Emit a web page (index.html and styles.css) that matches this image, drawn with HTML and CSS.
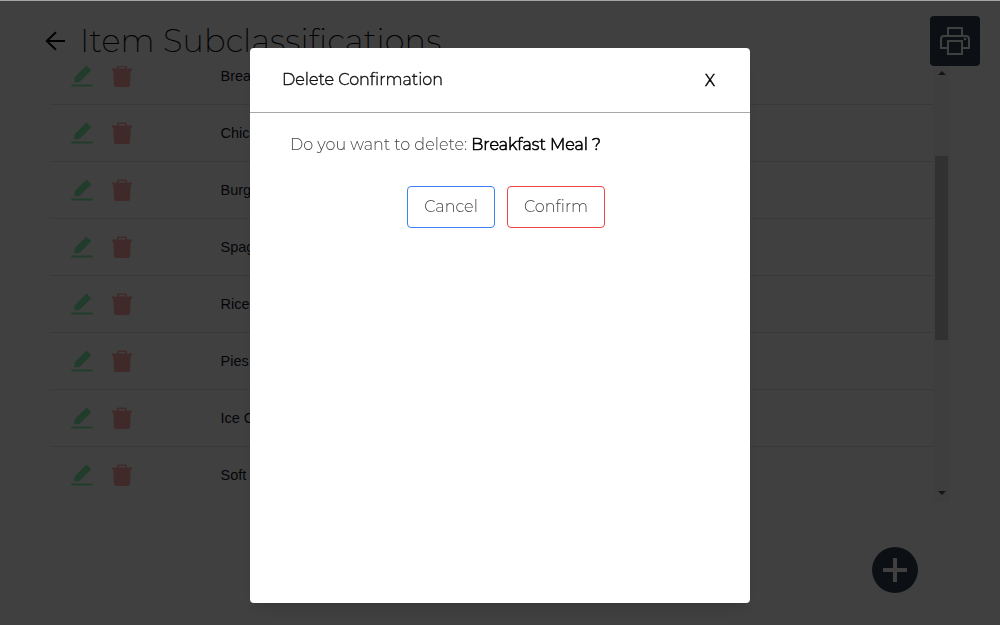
FILE: index.html
```html
<!DOCTYPE html>
<html lang="en">
<head>
<meta charset="utf-8">
<title>Item Subclassifications</title>
<link rel="stylesheet" href="styles.css">
</head>
<body>
<svg class="defs" width="0" height="0">
  <symbol id="pencil" viewBox="0 0 24 24"><path d="M1.3 20.500h21.400v2H1.3zM16.5 1.500l4.800 4.800L9.500 18l-5.300.500.500-5.300z"/></symbol>
  <symbol id="trash" viewBox="0 0 24 24"><path fill-rule="evenodd" d="M8 1.500h8l1 1v2h5v2h-1.200L20 21q0 2-2 2H6q-2 0-2-2L3.200 6.500H2v-2h5v-2zM8.700 3v1.500h6.600V3z"/></symbol>
</svg>
<div class="page">
  <header class="header">
    <svg class="back" viewBox="0 0 22 20"><path d="M21 10H2M11.500 .8L1.800 10l9.700 9.200"/></svg>
    <h1 class="title">Item Subclassifications</h1>
    <button class="print"><svg viewBox="0 0 32 32"><path d="M9 10V3h14v7M9 23H2V14q0-3 3-3h22q3 0 3 3v9h-7M9 16h14v13H9z"/><circle cx="26" cy="14" r="1.300"/></svg></button>
  </header>
  <main class="list">
    <div class="rows">
      <div class="row"><svg><use href="#pencil"/></svg><svg class="bin"><use href="#trash"/></svg><span>Breakfast Meal</span></div>
      <div class="row"><svg><use href="#pencil"/></svg><svg class="bin"><use href="#trash"/></svg><span>Chicken</span></div>
      <div class="row"><svg><use href="#pencil"/></svg><svg class="bin"><use href="#trash"/></svg><span>Burger</span></div>
      <div class="row"><svg><use href="#pencil"/></svg><svg class="bin"><use href="#trash"/></svg><span>Spaghetti</span></div>
      <div class="row"><svg><use href="#pencil"/></svg><svg class="bin"><use href="#trash"/></svg><span>Rice</span></div>
      <div class="row"><svg><use href="#pencil"/></svg><svg class="bin"><use href="#trash"/></svg><span>Pies</span></div>
      <div class="row"><svg><use href="#pencil"/></svg><svg class="bin"><use href="#trash"/></svg><span>Ice Cream</span></div>
      <div class="row"><svg><use href="#pencil"/></svg><svg class="bin"><use href="#trash"/></svg><span>Soft Drinks</span></div>
    </div>
    <div class="scrollbar"><i class="up"></i><i class="thumb"></i><i class="down"></i></div>
  </main>
  <button class="add"><svg viewBox="0 0 24 24"><path d="M12 0v24M0 12h24"/></svg></button>
</div>
<div class="overlay">
  <section class="modal">
    <div class="modal-head"><h2 class="modal-title">Delete Confirmation</h2><button class="close">X</button></div>
    <p class="question"><span class="ask">Do you want to delete:</span><b>Breakfast Meal ?</b></p>
    <div class="actions"><button class="btn cancel">Cancel</button><button class="btn confirm">Confirm</button></div>
  </section>
</div>
</body>
</html>
```
FILE: styles.css
```css
* { box-sizing: border-box; margin: 0; padding: 0; }
body { height: 625px; overflow: hidden; background: #fff; font-family: Montserrat, Inter, "Open Sans", sans-serif; }
button { font: inherit; background: none; border: 0; }
.defs { position: absolute; }
.page { height: 625px; display: flex; flex-direction: column; }
.header { height: 66px; padding: 16px 20px 0 45px; display: flex; align-items: center; flex-shrink: 0; }
.back { width: 21px; height: 20px; fill: none; stroke: #000; stroke-width: 2; }
.title { flex: 1; margin-left: 14px; font-size: 32px; line-height: 50px; font-weight: 200; letter-spacing: .15px; white-space: nowrap; color: #000; -webkit-text-stroke: .1px #000; }
.print { width: 50px; height: 50px; border-radius: 4px; background: #334155; display: grid; place-items: center; }
.print svg { width: 32px; height: 32px; fill: none; stroke: #fff; stroke-width: 2; }
.print circle { fill: #fff; stroke: none; }
.list { height: 436px; margin: 0 50px; overflow: hidden; display: flex; flex-shrink: 0; }
.rows { flex: 1; margin-top: -18px; }
.row { height: 57px; padding-left: 20px; border-bottom: 1px solid #e0e2e5; display: flex; align-items: center; gap: 16px; font: 14.5px "Liberation Sans", Arial, sans-serif; color: #0f172a; white-space: nowrap; }
.row:last-child { border-color: transparent; }
.row svg { width: 24px; height: 24px; fill: #86efac; }
.row .bin { fill: #fca5a5; }
.row span { margin-left: 70.5px; }
.scrollbar { width: 17px; background: #f5f5f5; display: flex; flex-direction: column; align-items: center; }
.up, .down { border: 4px solid transparent; }
.up { border-bottom-color: #505050; border-top: 0; margin-top: 5px; }
.down { border-top-color: #505050; border-bottom: 0; margin-top: 151px; }
.thumb { width: 13px; height: 184px; margin-top: 81px; background: #c1c1c1; }
.add { width: 46px; height: 46px; margin: 45px 82px 0 auto; border-radius: 50%; background: #334155; display: grid; place-items: center; }
.add svg { width: 24px; height: 24px; stroke: #fff; stroke-width: 4; }
.overlay { position: fixed; inset: 0; background: rgba(0, 0, 0, .75); border-top: 1px solid #a5a7a5; display: flex; justify-content: center; align-items: flex-start; padding-top: 47px; }
.modal { width: 500px; height: 555px; background: #fff; border-radius: 4px; box-shadow: 0 10px 15px -3px rgba(0, 0, 0, .1), 0 4px 6px -4px rgba(0, 0, 0, .1); }
.modal-head { height: 65px; padding: 0 32px; border-bottom: 1px solid #aaa; display: flex; align-items: center; justify-content: space-between; }
.modal-title { padding-bottom: 2px; font-size: 16px; font-weight: 300; color: #111; -webkit-text-stroke: .4px #111; }
.close { width: 16px; font-size: 16px; color: #000; -webkit-text-stroke: .3px #000; }
.question { margin: 21px 0 0 40px; display: flex; gap: 4px; font-size: 16px; line-height: 22px; font-weight: 300; color: #444; white-space: nowrap; }
.question b { font-weight: 300; color: #000; -webkit-text-stroke: .6px #000; }
.actions { margin: 30px 0 0 157px; display: flex; gap: 12px; }
.btn { height: 42px; width: 88px; padding-bottom: 2px; border: 1px solid #3b82f6; border-radius: 4px; font-size: 16px; font-weight: 300; color: #444; }
.confirm { width: 98px; border-color: #ef4444; }
```
